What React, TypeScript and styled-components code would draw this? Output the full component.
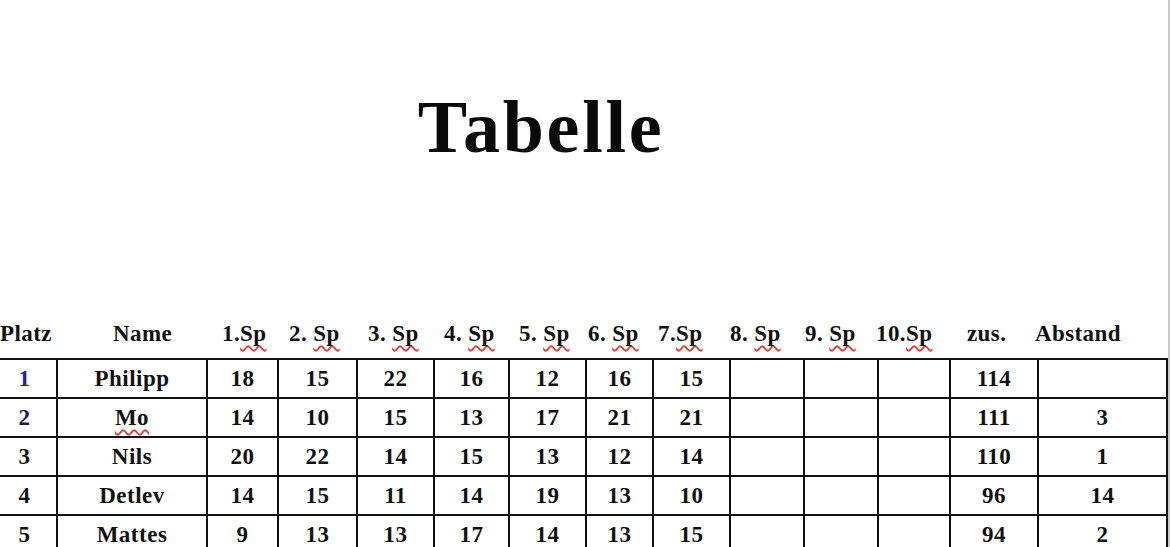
import styled, { createGlobalStyle } from "styled-components";

interface Player {
  place: number;
  name: string;
  games: (number | null)[];
  total: number;
  gap: number | null;
}

const headers = [
  { label: "Platz", w: 113 },
  { label: "Name", w: 109 },
  { label: "1.", sp: true, w: 67 },
  { label: "2. ", sp: true, w: 79 },
  { label: "3. ", sp: true, w: 76 },
  { label: "4. ", sp: true, w: 75 },
  { label: "5. ", sp: true, w: 69 },
  { label: "6. ", sp: true, w: 70 },
  { label: "7.", sp: true, w: 72 },
  { label: "8. ", sp: true, w: 75 },
  { label: "9. ", sp: true, w: 71 },
  { label: "10.", sp: true, w: 91 },
  { label: "zus.", w: 68 },
  { label: "Abstand", w: 120 },
];

const columns = [65, 150, 71, 79, 77, 75, 77, 67, 77, 74, 74, 72, 88, 129];

const players: Player[] = [
  { place: 1, name: "Philipp", games: [18, 15, 22, 16, 12, 16, 15, null, null, null], total: 114, gap: null },
  { place: 2, name: "Mo", games: [14, 10, 15, 13, 17, 21, 21, null, null, null], total: 111, gap: 3 },
  { place: 3, name: "Nils", games: [20, 22, 14, 15, 13, 12, 14, null, null, null], total: 110, gap: 1 },
  { place: 4, name: "Detlev", games: [14, 15, 11, 14, 19, 13, 10, null, null, null], total: 96, gap: 14 },
  { place: 5, name: "Mattes", games: [9, 13, 13, 17, 14, 13, 15, null, null, null], total: 94, gap: 2 },
];

// Platz-Ziffern sind im Original farbig
const placeColors: Record<number, string> = {
  1: "#2323a6",
  2: "#1c1c52",
};

const App = () => {
  return (
    <Sheet>
      <GlobalStyle />
      <Title>Tabelle</Title>
      <HeadRow>
        {headers.map((h) => (
          <HeadCell key={h.label + h.w} $w={h.w}>
            {h.label}
            {h.sp && <Misspelled>Sp</Misspelled>}
          </HeadCell>
        ))}
      </HeadRow>
      <Table>
        {players.map((p) => (
          <Row key={p.place}>
            <Cell $w={columns[0]} $color={placeColors[p.place]}>
              {p.place}
            </Cell>
            <Cell $w={columns[1]}>
              {p.name === "Mo" ? <Misspelled>Mo</Misspelled> : p.name}
            </Cell>
            {p.games.map((g, i) => (
              <Cell key={i} $w={columns[i + 2]}>
                {g ?? ""}
              </Cell>
            ))}
            <Cell $w={columns[12]}>{p.total}</Cell>
            <Cell $w={columns[13]}>{p.gap ?? ""}</Cell>
          </Row>
        ))}
      </Table>
    </Sheet>
  );
};

export default App;

const GlobalStyle = createGlobalStyle`
  html, body {
    margin: 0;
    padding: 0;
    overflow: hidden;
    background: #ffffff;
  }
  * {
    box-sizing: border-box;
  }
`;

const Sheet = styled.div`
  width: 1170px;
  height: 547px;
  overflow: hidden;
  padding-top: 90px;
  background: #ffffff;
  border-right: 2px solid #c9c9c9;
  font-family: "Liberation Serif", "Times New Roman", serif;
  font-weight: 700;
  color: #111111;
`;

const Title = styled.h1`
  margin: 0 0 157px 0;
  padding-right: 86px;
  font-size: 74px;
  line-height: 74px;
  letter-spacing: 2.7px;
  font-weight: 700;
  text-align: center;
  color: #0a0a0a;
`;

const HeadRow = styled.div`
  display: flex;
  height: 37px;
  font-size: 23px;
  line-height: 26px;
  letter-spacing: 0.4px;
`;

const HeadCell = styled.div<{ $w: number }>`
  flex: 0 0 ${(p) => p.$w}px;
  white-space: pre;
`;

const Misspelled = styled.span`
  text-decoration: underline wavy #e0403c;
  text-decoration-thickness: 1.5px;
  text-underline-offset: 4px;
  text-decoration-skip-ink: none;
`;

const Table = styled.div`
  display: flex;
  flex-direction: column;
  margin-left: -9px;
  border-top: 2px solid #111111;
  border-left: 2px solid #111111;
  width: max-content;
`;

const Row = styled.div`
  display: flex;
`;

const Cell = styled.div<{ $w: number; $color?: string }>`
  flex: 0 0 ${(p) => p.$w}px;
  height: 39px;
  border-right: 2px solid #111111;
  border-bottom: 2px solid #111111;
  text-align: center;
  font-size: 23px;
  line-height: 37px;
  letter-spacing: 0.5px;
  color: ${(p) => p.$color ?? "#111111"};
`;
